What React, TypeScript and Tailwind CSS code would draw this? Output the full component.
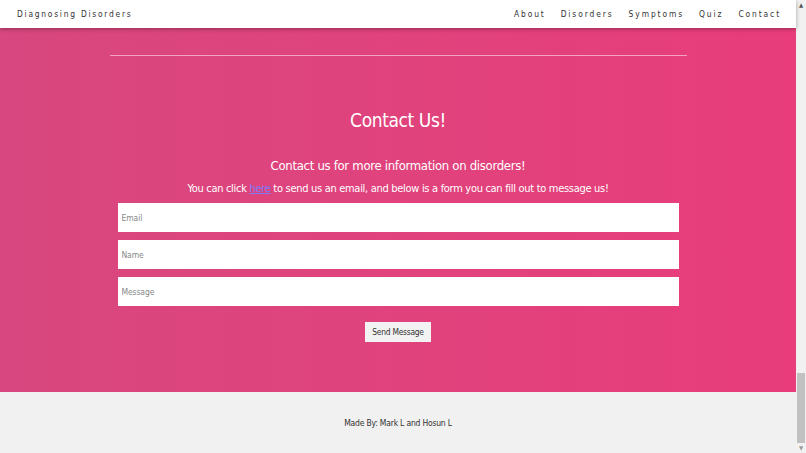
import React from "react";

const links = ["About", "Disorders", "Symptoms", "Quiz", "Contact"];

export default function App() {
  return (
    <div className="flex h-[453px] w-[806px] overflow-hidden font-['DejaVu_Sans_Condensed','DejaVu_Sans',sans-serif]">
      <div className="relative flex w-[796px] flex-col">
        {/* navbar */}
        <nav className="absolute left-0 top-0 z-10 flex h-[28px] w-full items-center justify-between bg-white pl-[17px] pr-[15px] shadow-[0_1px_4px_rgba(0,0,0,0.35)]">
          <span className="text-[8.4px] tracking-[1.75px] text-[#333]">Diagnosing Disorders</span>
          <div className="flex gap-[15px]">
            {links.map((l) => (
              <a key={l} className="text-[8.4px] tracking-[1.9px] text-[#333]">
                {l}
              </a>
            ))}
          </div>
        </nav>

        {/* contact section */}
        <section className="flex h-[392px] flex-col items-center bg-gradient-to-r from-[#d8477f] to-[#e83d7a] pt-[55px]">
          <hr className="w-[577px] border-t border-[#f5a3c3]" />
          <h1 className="mt-[50px] text-[19px] leading-[28px] tracking-[-0.4px] text-white">Contact Us!</h1>
          <p className="mt-[22px] text-[13px] leading-[20px] tracking-[-0.3px] text-white">
            Contact us for more information on disorders!
          </p>
          <p className="mt-[3px] text-[11px] leading-[20px] tracking-[-0.3px] text-white">
            You can click{" "}
            <a href="#" className="text-[#7b7bf5] underline">
              here
            </a>{" "}
            to send us an email, and below is a form you can fill out to message us!
          </p>
          <form className="mt-[4px] flex w-[561px] flex-col gap-[8px]">
            {["Email", "Name", "Message"].map((p) => (
              <input
                key={p}
                placeholder={p}
                className="h-[29px] w-full bg-white px-[4px] text-[8.5px] tracking-[-0.1px] text-[#555] placeholder:text-[#888] outline-none"
              />
            ))}
          </form>
          <button className="mt-[16px] h-[20px] w-[66px] bg-[#f2f2f2] text-[8.4px] tracking-[-0.25px] text-[#333]">
            Send Message
          </button>
        </section>

        {/* footer */}
        <footer className="flex flex-1 items-center justify-center bg-[#f1f1f1] pt-[2px]">
          <p className="text-[8.5px] tracking-[-0.2px] text-[#333]">Made By: Mark L and Hosun L</p>
        </footer>
      </div>

      {/* scrollbar */}
      <div className="flex w-[10px] flex-col bg-[#f1f1f1]">
        <div className="h-[10px] text-center text-[6px] leading-[10px] text-[#555]">▲</div>
        <div className="flex-1" />
        <div className="mx-[1px] h-[70px] bg-[#c1c1c1]" />
        <div className="h-[10px] text-center text-[6px] leading-[10px] text-[#999]">▼</div>
      </div>
    </div>
  );
}
